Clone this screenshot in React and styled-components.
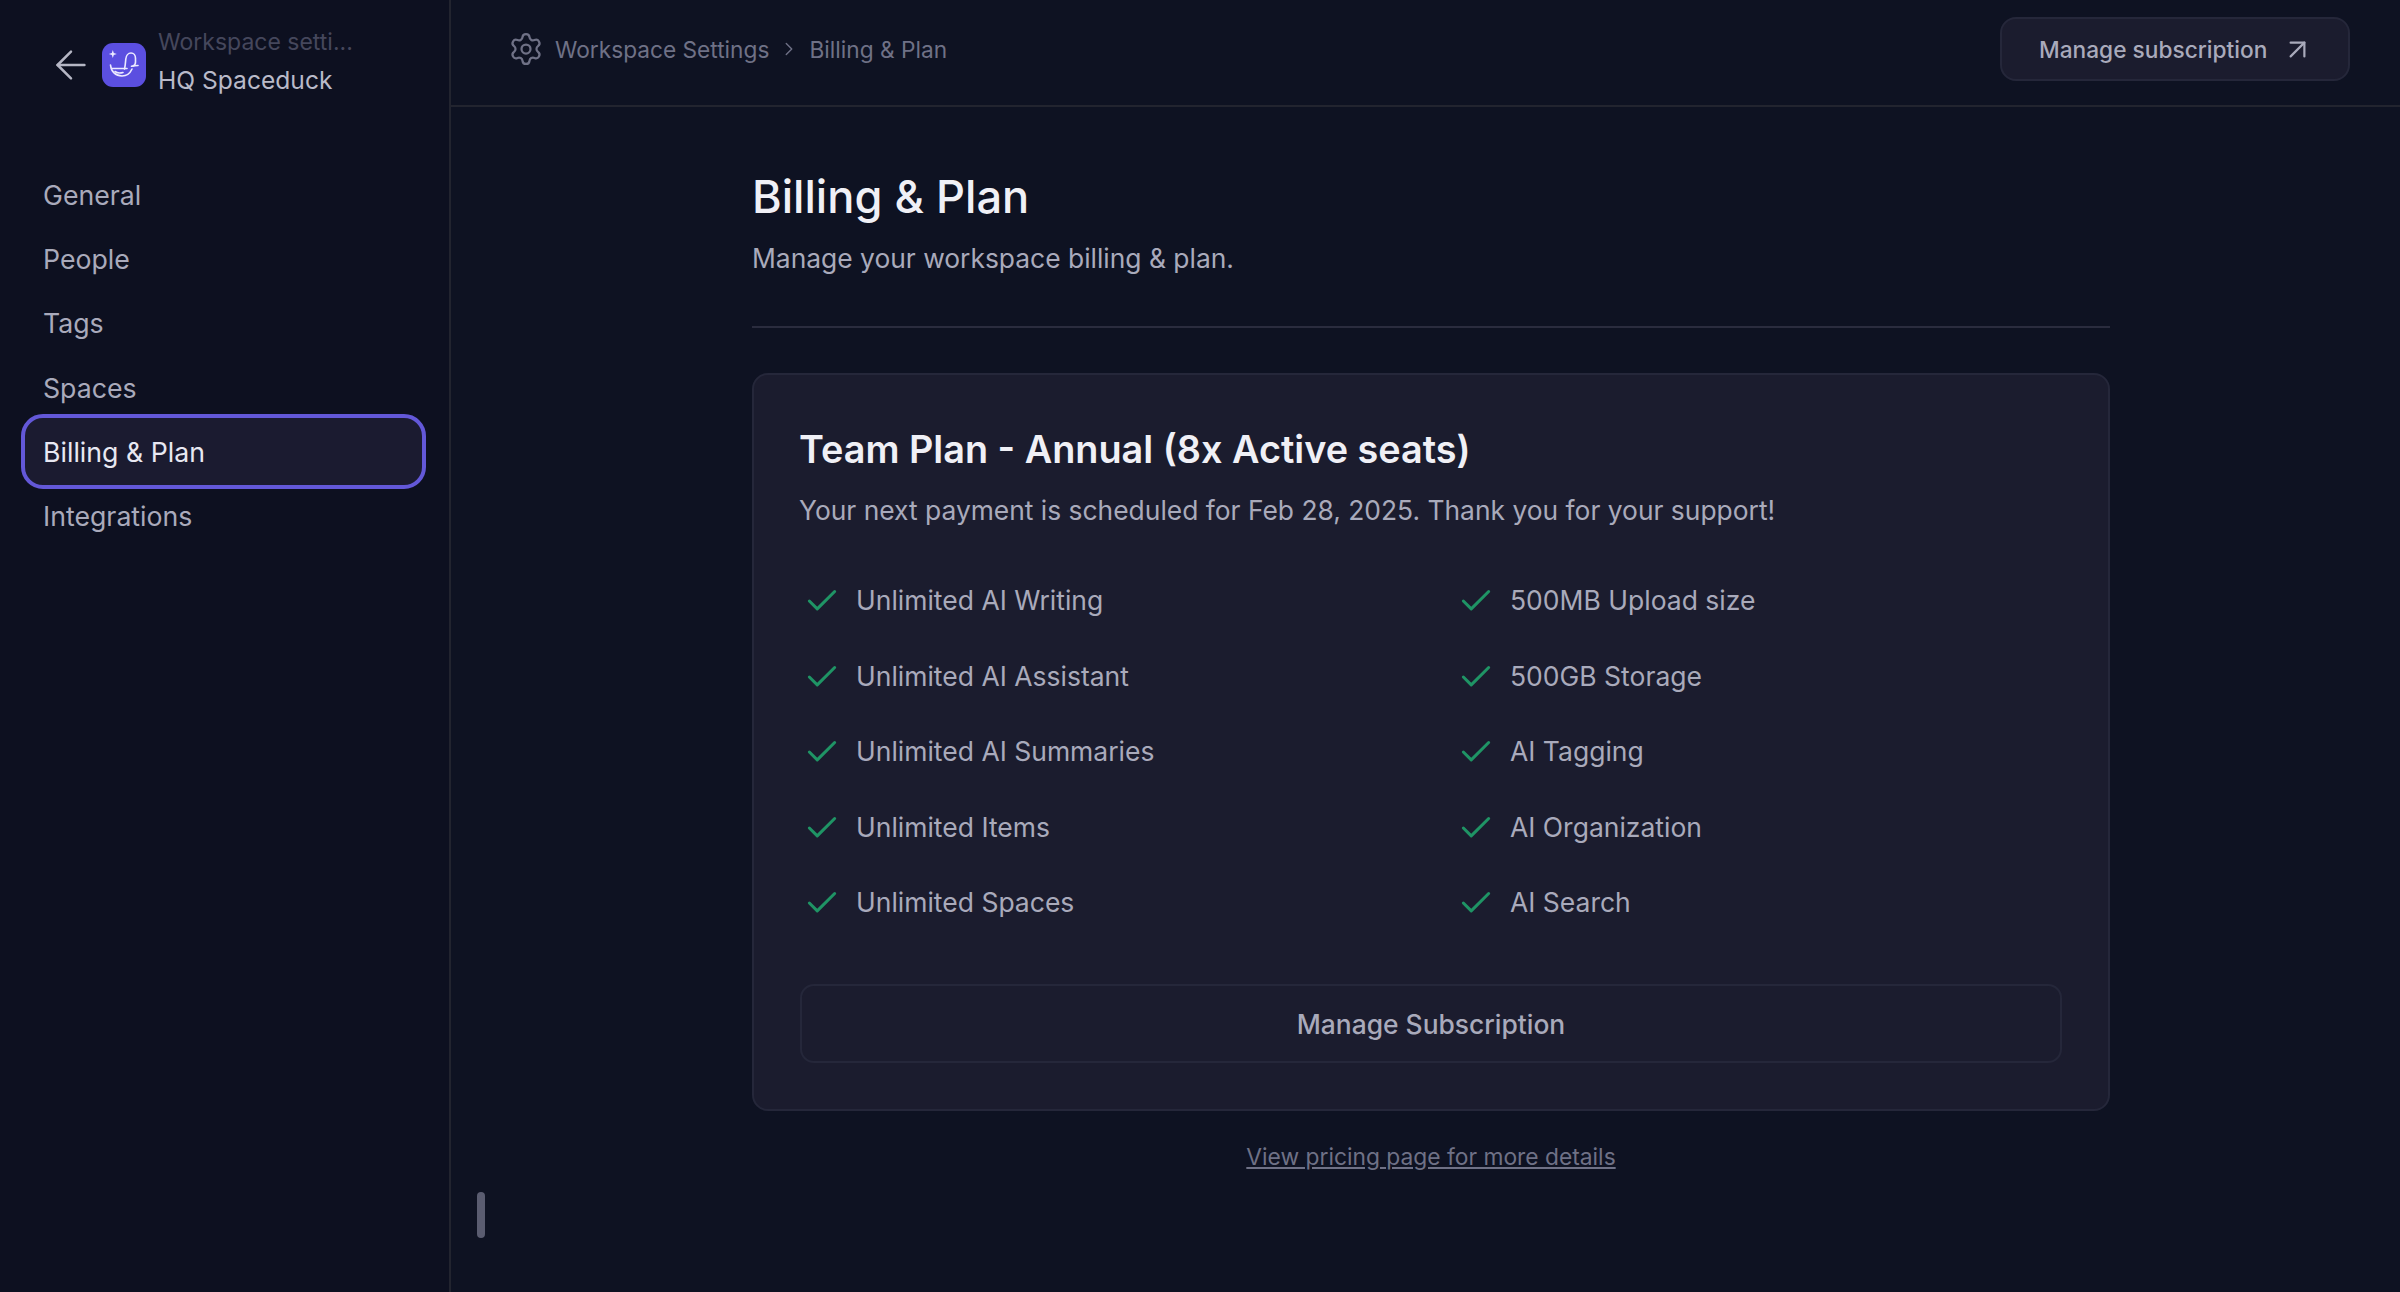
import React from 'react';
import styled, { createGlobalStyle } from 'styled-components';
import { ArrowLeft, ArrowUpRight, Check, ChevronRight, Settings } from 'lucide-react';

const navItems = ['General', 'People', 'Tags', 'Spaces', 'Billing & Plan', 'Integrations'];

const features = [
  'Unlimited AI Writing',
  '500MB Upload size',
  'Unlimited AI Assistant',
  '500GB Storage',
  'Unlimited AI Summaries',
  'AI Tagging',
  'Unlimited Items',
  'AI Organization',
  'Unlimited Spaces',
  'AI Search',
];

const DuckLogo = () => (
  <LogoBox>
    <svg width="44" height="44" viewBox="0 0 44 44" fill="none" stroke="#eceaff" strokeWidth="1.6" strokeLinecap="round" strokeLinejoin="round">
      <path d="M10.800 7l1 3 3 1-3 1-1 3-1-3-3-1 3-1z" fill="#eceaff" stroke="none" />
      <path d="M22.500 26c.8-3 1-6.500 1.300-10 .3-3.500 2.500-6 5.200-6 2.700 0 4.500 2.200 4.500 5.200v3.800c0 2-.8 3.500-2.500 4" />
      <path d="M36 22.500c-2 0-4.500.3-6.500 .8" />
      <path d="M8.500 22c.5 6.500 5 11 11.500 11 4.500 0 8-2.500 10-7" />
      <path d="M9.500 25.500h15.500" />
      <path d="M13 28.500c2 1.500 5 1.800 8 1" />
    </svg>
  </LogoBox>
);

const App = () => (
  <Page>
    <GlobalStyle />
    <Sidebar>
      <Brand>
        <BackIcon size={46} strokeWidth={1.3} />
        <DuckLogo />
        <BrandText>
          <BrandLabel>Workspace setti...</BrandLabel>
          <BrandName>HQ Spaceduck</BrandName>
        </BrandText>
      </Brand>
      <Nav>
        {navItems.map(item => (
          <NavItem key={item} active={item === 'Billing & Plan' ? 1 : 0}>
            {item}
          </NavItem>
        ))}
      </Nav>
    </Sidebar>
    <Main>
      <ResizeHandle />
      <Header>
        <Crumbs>
          <GearIcon size={36} strokeWidth={1.5} />
          <span>Workspace Settings</span>
          <ChevronRight size={22} strokeWidth={1.5} />
          <span>Billing &amp; Plan</span>
        </Crumbs>
        <HeaderButton>
          Manage subscription
          <ArrowUpRight size={33} strokeWidth={1.6} />
        </HeaderButton>
      </Header>
      <Content>
        <Title>Billing &amp; Plan</Title>
        <Subtitle>Manage your workspace billing &amp; plan.</Subtitle>
        <Divider />
        <Card>
          <CardTitle>Team Plan - Annual (8x Active seats)</CardTitle>
          <CardText>Your next payment is scheduled for Feb 28, 2025. Thank you for your support!</CardText>
          <FeatureGrid>
            {features.map(feature => (
              <Feature key={feature}>
                <CheckIcon size={38} strokeWidth={1.9} />
                {feature}
              </Feature>
            ))}
          </FeatureGrid>
          <CardButton>Manage Subscription</CardButton>
        </Card>
        <PricingLink href="#pricing">View pricing page for more details</PricingLink>
      </Content>
    </Main>
  </Page>
);

const GlobalStyle = createGlobalStyle`
  html, body {
    margin: 0;
    height: 100%;
    background: #0e1222;
  }
  * {
    box-sizing: border-box;
  }
`;

const Page = styled.div`
  display: grid;
  grid-template-columns: 451px 1fr;
  height: 1292px;
  overflow: hidden;
  background: #0e1222;
  font-family: Inter, "Liberation Sans", sans-serif;
`;

const Sidebar = styled.aside`
  border-right: 2px solid #22242f;
  background: #0d1020;
  padding: 0 21px;
`;

const Brand = styled.div`
  display: flex;
  align-items: center;
  height: 130px;
  padding-left: 27px;
`;

const BackIcon = styled(ArrowLeft)`
  color: #b5b6c4;
  margin-right: 8px;
  flex: none;
`;

const LogoBox = styled.div`
  display: flex;
  width: 44px;
  height: 44px;
  flex: none;
  border-radius: 11px;
  background: #5b4fe0;
`;

const BrandText = styled.div`
  display: flex;
  flex-direction: column;
  gap: 7px;
  margin: 0 0 8px 12px;
`;

const BrandLabel = styled.div`
  font-size: 23px;
  line-height: 31px;
  color: #45475c;
  white-space: nowrap;
`;

const BrandName = styled.div`
  font-size: 24.600px;
  line-height: 31px;
  color: #b9bac9;
  white-space: nowrap;
`;

const Nav = styled.nav`
  display: flex;
  flex-direction: column;
  margin-top: 33px;
`;

const NavItem = styled.div`
  display: flex;
  align-items: center;
  width: 405px;
  height: ${p => (p.active ? '75px' : '64.2px')};
  margin: ${p => (p.active ? '-5.400px 0' : '0')};
  padding-left: ${p => (p.active ? '18px' : '22px')};
  border: ${p => (p.active ? '4px solid #6358d8' : 'none')};
  border-radius: 22px;
  background: ${p => (p.active ? '#1b1b30' : 'transparent')};
  color: ${p => (p.active ? '#e8e8f2' : '#a9aabb')};
  font-size: 26.700px;
`;

const Main = styled.main`
  position: relative;
  min-width: 0;
`;

const ResizeHandle = styled.div`
  position: absolute;
  left: 26px;
  top: 1192px;
  width: 8px;
  height: 46px;
  border-radius: 4px;
  background: #5a5c70;
`;

const Header = styled.header`
  display: flex;
  align-items: center;
  justify-content: space-between;
  height: 107px;
  padding: 0 50px 7px 57px;
  border-bottom: 2px solid #22242f;
`;

const Crumbs = styled.div`
  display: flex;
  align-items: center;
  gap: 9px;
  font-size: 22.700px;
  color: #6f7186;
`;

const GearIcon = styled(Settings)`
  margin-right: 2px;
`;

const HeaderButton = styled.button`
  display: flex;
  align-items: center;
  gap: 14px;
  height: 64px;
  width: 350px;
  padding: 0 0 0 37px;
  border: 2px solid #25273a;
  border-radius: 16px;
  background: #1b1c2e;
  color: #a9aabb;
  font-family: inherit;
  font-size: 22.700px;
  font-weight: 500;
`;

const Content = styled.div`
  display: flex;
  flex-direction: column;
  width: 1358px;
  margin-left: 301px;
  padding-top: 64px;
`;

const Title = styled.h1`
  margin: 0;
  font-size: 45.200px;
  line-height: 52px;
  font-weight: 500;
  color: #f0f0f6;
`;

const Subtitle = styled.p`
  margin: 18px 0 0;
  font-size: 26.400px;
  line-height: 34px;
  color: #a9aabb;
`;

const Divider = styled.hr`
  width: 100%;
  height: 2px;
  margin: 51px 0 45px;
  border: none;
  background: #2a2c3e;
`;

const Card = styled.section`
  display: flex;
  flex-direction: column;
  height: 738px;
  padding: 50px 46px 46px;
  border: 2px solid #25273a;
  border-radius: 16px;
  background: #1b1c2e;
`;

const CardTitle = styled.h2`
  margin: 0 0 0 -1px;
  font-size: 37.800px;
  line-height: 48px;
  font-weight: 600;
  color: #f0f0f6;
`;

const CardText = styled.p`
  margin: 19px 0 0 -1px;
  font-size: 26.400px;
  line-height: 36px;
  color: #a9aabb;
`;

const FeatureGrid = styled.div`
  display: grid;
  grid-template-columns: 1fr 1fr;
  column-gap: 46px;
  row-gap: 35.500px;
  margin-top: 52px;
`;

const Feature = styled.div`
  display: flex;
  align-items: center;
  gap: 15px;
  height: 40px;
  padding-left: 3px;
  font-size: 26.500px;
  color: #a9aabb;
`;

const CheckIcon = styled(Check)`
  margin-top: 2px;
  color: #1f9465;
`;

const CardButton = styled.button`
  height: 79px;
  margin-top: auto;
  border: 2px solid #25273a;
  border-radius: 14px;
  background: #1b1c2e;
  color: #a9aabb;
  font-family: inherit;
  font-size: 26.400px;
  font-weight: 500;
`;

const PricingLink = styled.a`
  align-self: center;
  margin-top: 31px;
  font-size: 22.800px;
  line-height: 30px;
  color: #6f7186;
  text-decoration: underline;
`;

export default App;
